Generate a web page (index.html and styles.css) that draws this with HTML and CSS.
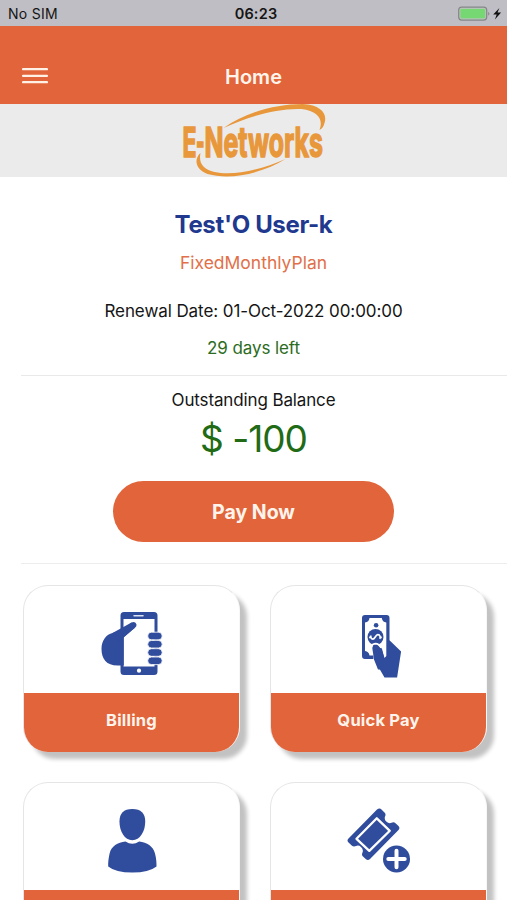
FILE: index.html
```html
<!DOCTYPE html>
<html lang="en">
<head>
<meta charset="utf-8">
<title>Home</title>
<link rel="stylesheet" href="styles.css">
</head>
<body>
<div class="status">
  <span class="carrier">No SIM</span>
  <span class="time">06:23</span>
  <svg class="battery" width="46" height="16" viewBox="458 5.500 46 16">
    <rect x="458.7" y="6.6" width="28" height="13" rx="3" fill="#b5c5b4" stroke="#85858a" stroke-width="1.2"/>
    <rect x="460.5" y="8.4" width="24.5" height="9.4" rx="1.3" fill="#75d873"/>
    <path d="M488.2 11.2q2.5 1.8 0 4z" fill="#85858a"/>
    <path d="M499.4 7.4l-6.2 6.6h3.5l-1.8 5 6.2-7h-3.6z" fill="#111"/>
  </svg>
</div>
<header class="bar">
  <svg class="menu" width="26" height="18" viewBox="0 0 26 18"><path d="M1 2.2h24M1 8.8h24M1 15.2h24" stroke="#fff1e6" stroke-width="2.2" stroke-linecap="round"/></svg>
  <h1 class="title">Home</h1>
</header>
<div class="brand">
  <svg width="150" height="74" viewBox="178.500 104 150 74">
    <g fill="#e8973b">
      <path d="M223 128C246 112 276 104 302 104C321 105 327 114 324 123C323 127 321 129 319 130C323 120 318 111 301 109C277 108 250 116 223 128Z"/>
      <path d="M200 153C193 159 195 170 207 174C232 181 264 172 285 159C260 170 233 176 214 172C202 169 198 163 200 153Z"/>
    </g>
    <text class="logo" y="157"><tspan x="182" textLength="14" lengthAdjust="spacingAndGlyphs">E</tspan><tspan x="195.500" textLength="8.500" lengthAdjust="spacingAndGlyphs">-</tspan><tspan x="204" textLength="118.500" lengthAdjust="spacingAndGlyphs">Networks</tspan></text>
  </svg>
</div>
<main>
  <section class="account">
    <h2 class="name">Test'O User-k</h2>
    <p class="plan">FixedMonthlyPlan</p>
    <p class="renewal">Renewal Date: 01-Oct-2022 00:00:00</p>
    <p class="days">29 days left</p>
  </section>
  <section class="balance">
    <p class="label">Outstanding Balance</p>
    <p class="amount">$ -100</p>
    <button class="pay">Pay Now</button>
  </section>
  <section class="grid">
    <div class="card">
      <div class="pic">
        <svg width="62" height="66" viewBox="100.500 611 62 66" fill="#304c9c">
          <path fill-rule="evenodd" d="M123.500 612h30q3.500 0 3.500 3.500v56q0 3.500-3.500 3.500h-30q-3.500 0-3.500-3.500v-56q0-3.500 3.500-3.500zM123 619v47.500h31V619z"/>
          <path d="M123.300 629.500L130.500 622.800Q135 620.500 136 624.500Q136.300 626.500 134.500 627.800L123.300 637V665.500H117C106 665.500 101 659 101 649C101 640 106 634.500 112 633Q117 631 123.300 629.500Z"/>
          <path d="M112 633L131 622.500L134 628L118 642z"/>
          <path d="M133.500 615.800h9" stroke="#dce3f4" stroke-width="1.500" stroke-linecap="round"/>
          <circle cx="138.500" cy="670.700" r="2.100" fill="#fff"/>
          <g stroke="#fff" stroke-width=".8">
            <rect x="147.200" y="632.200" width="14.500" height="7.600" rx="3.800"/>
            <rect x="147.200" y="640.400" width="14.500" height="7.600" rx="3.800"/>
            <rect x="147.200" y="648.700" width="14.500" height="7.600" rx="3.800"/>
            <rect x="147.200" y="657" width="14.500" height="7.600" rx="3.800"/>
          </g>
        </svg>
      </div>
      <div class="caption">Billing</div>
    </div>
    <div class="card">
      <div class="pic">
        <svg class="cash" width="42" height="66" viewBox="360.500 613 42 66" fill="#304c9c">
          <path fill-rule="evenodd" d="M365.500 615h21.500q3 0 3 3v22.200l11.600 11.300-4 26h-12.600l-5.200-9-3.800-9.400h-10.500q-3 0-3-3V618q0-3 3-3zM370 618q-.5 4-4.500 4.500v28.500q4 .5 4.500 4.500h5l-1.500-8q-.4-4.500 3-4.500l5.500 5 3 10 1.800-2V622.500q-4-.5-4.500-4.500z"/>
          <path d="M374.600 661v-6" stroke="#fff" stroke-width="1.400"/>
          <circle cx="376.600" cy="625.300" r="2.300"/>
          <circle cx="376" cy="637" r="8"/>
          <path d="M371.900 650v-2.500q.4-3.700 4-3.900 3.800.1 5.600 4.400" fill="none" stroke="#fff" stroke-width="1.800"/>
          <path d="M371.300 635.500q-.3 3.600 2 3.600c2.200 0 2.700-4.400 5-4.400 2.600 0 2.700 2.700 2 4.100M369.600 637.400h1.700M380.600 637.400h1.700" fill="none" stroke="#fff" stroke-width="1.700"/>
          <path d="M377.500 645.500q-4-1.500-4.700 2.500l1.700 11.500 4 10h6v-12l-2-8z"/>
        </svg>
      </div>
      <div class="caption">Quick Pay</div>
    </div>
    <div class="card">
      <div class="pic">
        <svg width="50" height="66" viewBox="107 807.500 50 66" fill="#304c9c">
          <path d="M132.300 808.600C141 808.600 145.200 813 145.200 821C145.200 831 140 839.700 132.300 839.700C124.600 839.700 119.500 831 119.500 821C119.500 813 123.600 808.600 132.300 808.600Z"/>
          <path d="M125.500 841Q132.300 845.500 139.200 841C147 842 153 845.500 155 853C156.300 858 156.600 862 156.500 866Q149 872 132.300 872Q115.500 872 108.200 866C108 862 108.500 858 109.600 853C111.500 845.500 117.500 842 125.500 841Z"/>
        </svg>
      </div>
      <div class="caption"></div>
    </div>
    <div class="card">
      <div class="pic">
        <svg width="64" height="66" viewBox="346.500 807.500 64 66" fill="#304c9c">
          <path d="M376.500 809Q379 807.200 381 809L384.500 812.500Q385.500 814 384.500 816Q383.500 819 386 821.300Q388.500 823.500 391 822.200Q393.500 821.200 395 822.800L398 825.500Q399.800 827.500 398 829.500L369.500 858.500Q367.500 860.500 365.500 858.800L362 855.500Q361 854 362 852Q363.200 849 360.500 846.500Q358 844.200 355.500 845.600Q353 846.600 351.500 845.200L348 842Q346 840 348 838Z"/>
          <path d="M376.300 817.800L389.300 830.300L368.800 850.400L356 838.300Z" fill="none" stroke="#fff" stroke-width="2.300" stroke-linejoin="round"/>
          <circle cx="396" cy="858.500" r="13.500"/>
          <path d="M396 850.300v16.400M387.800 858.500h16.400" stroke="#fff" stroke-width="4" stroke-linecap="round"/>
        </svg>
      </div>
      <div class="caption"></div>
    </div>
  </section>
</main>
</body>
</html>
```
FILE: styles.css
```css
* { box-sizing: border-box; }
html, body { margin: 0; height: 900px; overflow: hidden; }
body {
  display: flex;
  flex-direction: column;
  background: #fff;
  font-family: Inter, "Liberation Sans", sans-serif;
  color: #151515;
}
h1, h2, p { margin: 0; }
svg { display: block; }
main { flex: 1; min-height: 0; overflow: hidden; }

.status {
  flex: none;
  height: 25.500px;
  padding: 2px 3px 0 8px;
  display: grid;
  grid-template-columns: 1fr auto 1fr;
  align-items: center;
  background: #bfbec4;
}
.carrier { font-size: 14px; letter-spacing: .3px; }
.time { font-size: 14.500px; font-weight: 600; letter-spacing: .2px; }
.battery { justify-self: end; }

.bar {
  flex: none;
  height: 78px;
  padding: 24px 22px 0;
  display: grid;
  grid-template-columns: 1fr auto 1fr;
  align-items: center;
  background: #e1643a;
}
.menu { margin-top: -1px; }
.title { font-size: 20px; font-weight: 600; line-height: 24px; color: #fff4ec; }

.brand { flex: none; height: 73px; display: flex; justify-content: center; background: #ebebeb; }
.logo { font-size: 41.500px; font-weight: 700; fill: #e8973b; stroke: #e8973b; stroke-width: 1.600; }

.account {
  height: 199px;
  margin-left: 21px;
  padding: 32.500px 21px 0 0;
  border-bottom: 1.500px solid #e9e9e9;
  text-align: center;
}
.name { font-size: 24px; line-height: 32px; font-weight: 650; letter-spacing: -.35px; color: #21388f; }
.plan { margin-top: 10px; font-size: 17.500px; line-height: 24px; color: #e1704a; }
.renewal { margin-top: 24px; font-size: 17px; line-height: 24px; letter-spacing: -.08px; }
.days { margin-top: 13px; font-size: 17px; line-height: 24px; letter-spacing: -.1px; color: #2b6b22; }

.balance {
  height: 188px;
  margin-left: 21px;
  padding: 12px 21px 0 0;
  border-bottom: 1.500px solid #ededed;
  display: flex;
  flex-direction: column;
  align-items: center;
}
.label { font-size: 17px; line-height: 24px; letter-spacing: -.13px; }
.amount { margin-top: 4px; font-size: 37px; line-height: 46px; letter-spacing: -1px; color: #216b16; }
.pay {
  width: 281.500px;
  height: 61px;
  margin-top: 19.500px;
  padding: 1px 0 0;
  border: 0;
  border-radius: 31px;
  background: #e1643a;
  color: #fff4ec;
  font: 650 19.500px Inter, sans-serif;
}

.grid {
  padding: 21.500px 20px 0 23px;
  display: grid;
  grid-template-columns: 217px 217px;
  grid-auto-rows: 166.500px;
  gap: 30px;
}
.card {
  border-radius: 25px;
  border: 1px solid #e5e5e5;
  border-right-color: #f7f7f7;
  border-bottom: 0;
  background: #fff;
  box-shadow: 7.500px 7.500px 4px -1px #c2c2c2;
  overflow: hidden;
}
.pic { height: 107px; display: flex; justify-content: center; padding-top: 25px; }
.cash { margin-left: 5px; margin-top: 1.500px; }
.caption {
  height: 60px;
  padding-bottom: 6px;
  display: flex;
  align-items: center;
  justify-content: center;
  background: #e1643a;
  color: #fff4ec;
  font-size: 16.500px;
  font-weight: 700;
  letter-spacing: .2px;
}
```
